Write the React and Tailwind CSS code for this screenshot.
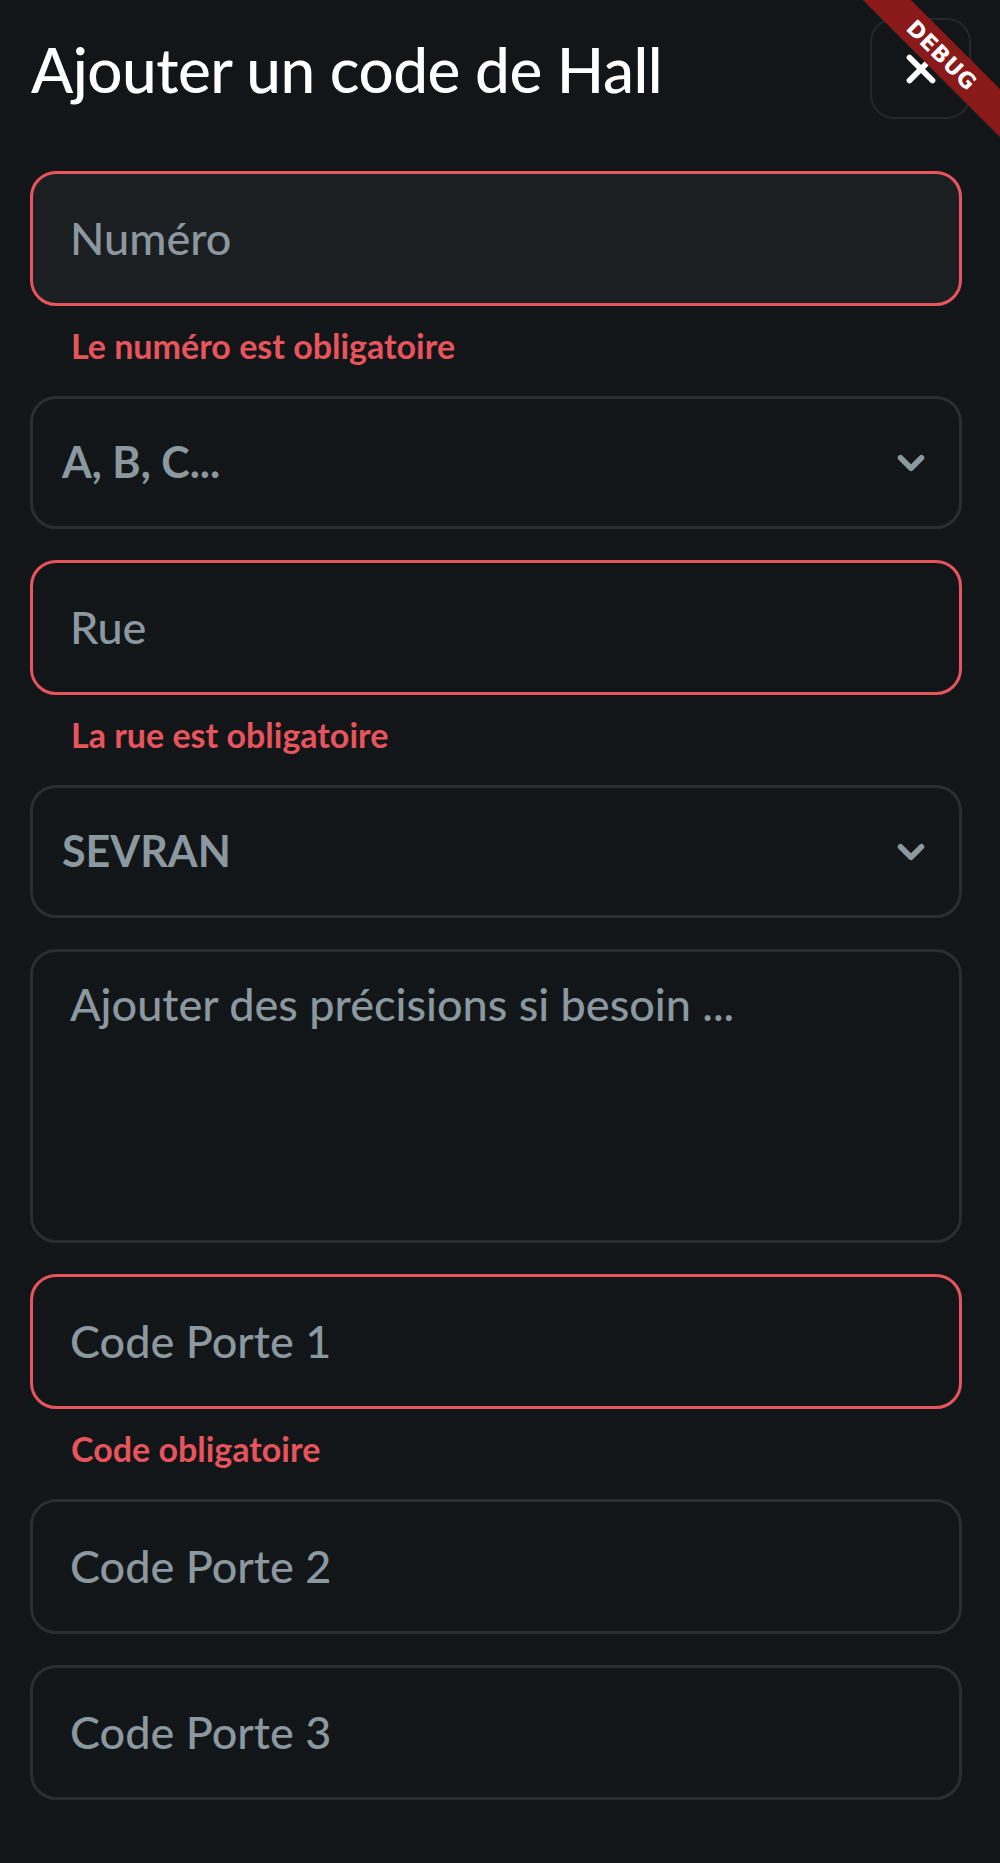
import React from "react";
import { ChevronDown, X } from "lucide-react";

const font = { fontFamily: "Lato, 'Noto Sans', sans-serif" };

function Field({ placeholder, error, filled }) {
  return (
    <div className="flex flex-col">
      <div
        className={`h-[135px] rounded-[26px] flex items-center pl-[37px] pr-6 ${
          error ? "border-[3.5px] border-[#e8545c]" : "border-[3px] border-[#2a2e32]"
        } ${filled ? "bg-[#1b1f21]" : "bg-[#121619]"}`}
      >
        <span className="text-[45px] font-medium text-[#8b989f]">{placeholder}</span>
      </div>
      {error && (
        <div className="mt-[21px] pl-[41px] h-[38px] flex items-center text-[34px] font-bold text-[#e8545c] leading-none">
          {error}
        </div>
      )}
    </div>
  );
}

function Select({ value }) {
  return (
    <div className="h-[133px] rounded-[26px] border-[3px] border-[#2a2e32] flex items-center justify-between pl-[29px] pr-[27px]">
      <span className="text-[43px] font-bold text-[#8b989f]">{value}</span>
      <ChevronDown className="w-[42px] h-[42px] text-[#8b989f]" strokeWidth={3.2} />
    </div>
  );
}

export default function App() {
  return (
    <div className="relative min-h-[1863px] w-full bg-[#121619] overflow-hidden" style={font}>
      {/* debug ribbon */}
      <div className="absolute top-0 right-0 w-[150px] h-[150px] overflow-hidden pointer-events-none z-10">
        <div className="absolute top-[38px] right-[-52px] w-[220px] h-[34px] bg-[#8a1a1a] rotate-45 flex items-center justify-center">
          <span className="text-white text-[22px] font-black tracking-wide" style={{ fontFamily: "'DejaVu Sans', sans-serif" }}>
            DEBUG
          </span>
        </div>
      </div>

      <div className="pl-[31px] pr-[29px] pt-[18px]">
        <div className="flex items-center justify-between">
          <h1 className="text-[62px] font-medium text-white leading-none tracking-[-0.5px]">Ajouter un code de Hall</h1>
          <button className="w-[101px] h-[101px] rounded-[24px] border-[2px] border-[#24282b] flex items-center justify-center">
            <X className="w-[46px] h-[46px] text-white" strokeWidth={3} />
          </button>
        </div>

        <div className="mt-[52px] -ml-px pr-[9px] flex flex-col gap-[31px]">
          <Field placeholder="Numéro" error="Le numéro est obligatoire" filled />
          <Select value="A, B, C..." />
          <Field placeholder="Rue" error="La rue est obligatoire" />
          <Select value="SEVRAN" />
          <div className="h-[294px] rounded-[26px] border-[3px] border-[#2a2e32] pl-[37px] pt-[19px]">
            <span className="text-[45px] font-medium text-[#8b989f]">Ajouter des précisions si besoin ...</span>
          </div>
          <Field placeholder="Code Porte 1" error="Code obligatoire" />
          <Field placeholder="Code Porte 2" />
          <Field placeholder="Code Porte 3" />
        </div>
      </div>
    </div>
  );
}
